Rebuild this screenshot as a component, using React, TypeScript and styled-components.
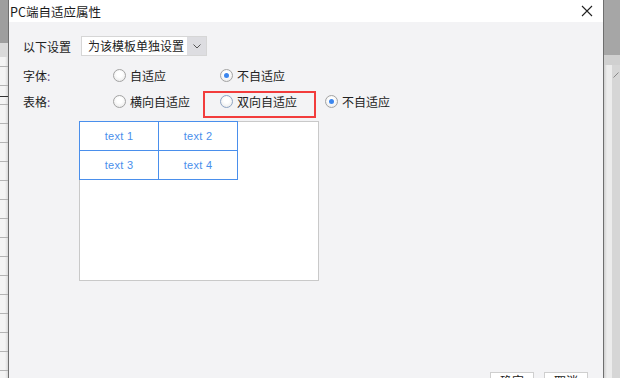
import React from "react";
import styled, { createGlobalStyle } from "styled-components";

const GlobalStyle = createGlobalStyle`
  html, body {
    margin: 0;
    padding: 0;
    height: 378px;
    overflow: hidden;
    background: #f2f2f2;
    font-family: "Noto Sans CJK SC", "Liberation Sans", sans-serif;
    font-size: 12px;
    color: #222;
  }
`;

const Page = styled.div`
  display: flex;
  width: 620px;
  height: 378px;
  overflow: hidden;
`;

const LeftStrip = styled.div`
  width: 8px;
  flex-shrink: 0;
  background:
    linear-gradient(#9e9e9e 0 43px, #dadada 43px 57px, transparent 57px),
    linear-gradient(transparent 96px, #333 96px 97px, transparent 97px),
    repeating-linear-gradient(#b4b4b4 0 1px, transparent 1px 19px) 0 9px / 100% 19px,
    linear-gradient(to right, #f4f4f4 0 5px, #d8d8d8 8px);
`;

const RightStrip = styled.div`
  width: 16px;
  flex-shrink: 0;
  display: flex;
  flex-direction: column;
`;

const RightHead = styled.div`
  height: 55px;
  flex-shrink: 0;
  background: #a6a6a6;
`;

const RightSub = styled.div`
  height: 10px;
  flex-shrink: 0;
  background: #d0d0d0;
`;

const RightBody = styled.div`
  flex: 1;
  display: flex;
`;

const Ruler = styled.div`
  width: 8px;
  background:
    repeating-linear-gradient(transparent 0 19px, #9c9c9c 19px 20px) 0 0 / 100% 19px,
    linear-gradient(to right, #cfcfcf, #ececec 3px);
`;

const Scroll = styled.div`
  flex: 1;
  background: #d6d6d6;
  position: relative;
`;

const Dialog = styled.div`
  width: 594px;
  flex-shrink: 0;
  border-left: 1px solid #6e6e6e;
  border-right: 1px solid #6e6e6e;
  background: #f3f3f5;
  display: flex;
  flex-direction: column;
  overflow: hidden;
`;

const TitleBar = styled.div`
  height: 22px;
  flex-shrink: 0;
  background: #fff;
  display: flex;
  align-items: center;
  justify-content: space-between;
  padding: 0 10px 0 1px;
  font-size: 12.5px;
  color: #1a1a1a;
`;

const CloseButton = styled.button`
  border: 0;
  background: none;
  padding: 0;
  width: 12px;
  height: 12px;
  display: flex;
  cursor: pointer;
`;

const Body = styled.div`
  padding: 14px 14px 0 14px;
  display: flex;
  flex-direction: column;
  flex-shrink: 0;
`;

const SettingRow = styled.div`
  display: flex;
  align-items: center;
  height: 20px;
  gap: 10px;
`;

const SelectBox = styled.div`
  width: 124px;
  height: 18px;
  border: 1px solid #d6d6d6;
  background: #fff;
  display: flex;
  align-items: stretch;
`;

const SelectText = styled.span`
  flex: 1;
  padding-left: 6px;
  line-height: 18px;
  font-size: 12px;
`;

const SelectArrow = styled.span`
  width: 19px;
  background: #dddde1;
  display: flex;
  align-items: center;
  justify-content: center;
`;

const RadioRow = styled.div<{ $top: number }>`
  display: grid;
  grid-template-columns: 90px 107px 105px auto;
  align-items: center;
  height: 20px;
  margin-top: ${(p) => p.$top}px;
`;

const FieldLabel = styled.span`
  color: #222;
`;

const Colon = styled.span`
  color: #6b4a8c;
`;

const Option = styled.label<{ $marked?: boolean }>`
  position: relative;
  display: flex;
  align-items: center;
  gap: 4px;
  white-space: nowrap;
  cursor: pointer;

  ${(p) =>
    p.$marked &&
    `
    &::after {
      content: "";
      position: absolute;
      left: -17px;
      top: -2px;
      width: 109px;
      height: 23px;
      border: 2px solid #f23c3c;
      pointer-events: none;
    }
  `}
`;

const RadioCircle = styled.span<{ $checked?: boolean; $hover?: boolean }>`
  width: 11px;
  height: 11px;
  border-radius: 50%;
  border: 1px solid ${(p) => (p.$hover ? "#8ea4c4" : "#a3a3a3")};
  background: radial-gradient(circle at 50% 40%, #ffffff 30%, #e4e4e4 100%);
  display: flex;
  align-items: center;
  justify-content: center;
  flex-shrink: 0;

  &::after {
    content: "";
    width: 5px;
    height: 5px;
    border-radius: 50%;
    background: ${(p) => (p.$checked ? "#3b86ee" : "transparent")};
  }
`;

const Preview = styled.div`
  margin: 10px 0 0 56px;
  width: 238px;
  height: 158px;
  border: 1px solid #c9c9c9;
  background: #fff;
`;

const PreviewTable = styled.div`
  display: inline-grid;
  grid-template-columns: 79px 79px;
  grid-auto-rows: 29px;
  border-right: 1px solid #4a8fec;
  border-bottom: 1px solid #4a8fec;
  margin: -1px 0 0 -1px;
`;

const Cell = styled.div`
  border-left: 1px solid #4a8fec;
  border-top: 1px solid #4a8fec;
  display: flex;
  align-items: center;
  justify-content: center;
  font-family: "Liberation Sans", Arial, sans-serif;
  font-size: 11px;
  letter-spacing: 0.3px;
  color: #4a8fec;
`;

const Footer = styled.div`
  display: flex;
  justify-content: flex-end;
  gap: 10px;
  margin-top: 91px;
  padding-right: 1px;
`;

const FooterButton = styled.button`
  width: 44px;
  height: 24px;
  border: 1px solid #cfcfcf;
  background: #fff;
  font-family: "Noto Sans CJK SC", sans-serif;
  font-size: 12px;
  line-height: 16px;
  color: #222;
  padding: 0 0 6px 0;
  flex-shrink: 0;
`;

const Chevron = () => (
  <svg width="8" height="5" viewBox="0 0 8 5">
    <path d="M0.5 0.5 L4 4 L7.5 0.5" fill="none" stroke="#555" strokeWidth="1" />
  </svg>
);

const CloseIcon = () => (
  <svg width="12" height="12" viewBox="0 0 12 12">
    <path d="M1 1 L11 11 M11 1 L1 11" stroke="#222" strokeWidth="1.1" />
  </svg>
);

interface RadioProps {
  label: string;
  checked?: boolean;
  marked?: boolean;
}

const Radio = (props: RadioProps) => (
  <Option $marked={props.marked}>
    <RadioCircle $checked={props.checked} $hover={props.marked} />
    {props.label}
  </Option>
);

const cells = ["text 1", "text 2", "text 3", "text 4"];

const App = () => (
  <>
    <GlobalStyle />
    <Page>
      <LeftStrip />
      <Dialog>
        <TitleBar>
          <span>PC端自适应属性</span>
          <CloseButton>
            <CloseIcon />
          </CloseButton>
        </TitleBar>
        <Body>
          <SettingRow>
            <FieldLabel>以下设置</FieldLabel>
            <SelectBox>
              <SelectText>为该模板单独设置</SelectText>
              <SelectArrow>
                <Chevron />
              </SelectArrow>
            </SelectBox>
          </SettingRow>
          <RadioRow $top={9}>
            <FieldLabel>
              字体<Colon>:</Colon>
            </FieldLabel>
            <Radio label="自适应" />
            <Radio label="不自适应" checked />
          </RadioRow>
          <RadioRow $top={6}>
            <FieldLabel>
              表格<Colon>:</Colon>
            </FieldLabel>
            <Radio label="横向自适应" />
            <Radio label="双向自适应" marked />
            <Radio label="不自适应" checked />
          </RadioRow>
          <Preview>
            <PreviewTable>
              {cells.map((c) => (
                <Cell key={c}>{c}</Cell>
              ))}
            </PreviewTable>
          </Preview>
          <Footer>
            <FooterButton>确定</FooterButton>
            <FooterButton>取消</FooterButton>
          </Footer>
        </Body>
      </Dialog>
      <RightStrip>
        <RightHead />
        <RightSub />
        <RightBody>
          <Ruler />
          <Scroll>
            <svg width="6" height="6" viewBox="0 0 6 6" style={{ position: "absolute", left: 1, top: 7 }}>
              <path d="M0.5 5.5 L5.5 0.5" stroke="#888" strokeWidth="1" />
            </svg>
          </Scroll>
        </RightBody>
      </RightStrip>
    </Page>
  </>
);

export default App;
